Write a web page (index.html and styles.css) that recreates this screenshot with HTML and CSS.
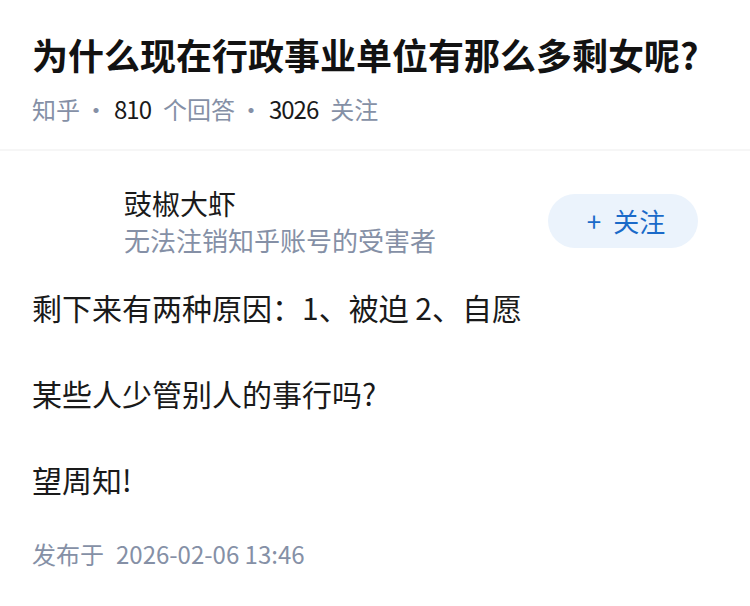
FILE: index.html
```html
<!DOCTYPE html>
<html lang="zh-CN">
<head>
<meta charset="utf-8">
<title>为什么现在行政事业单位有那么多剩女呢?</title>
<link rel="stylesheet" href="styles.css">
</head>
<body>
<div class="page">
  <header class="question">
    <h1 class="title">为什么现在行政事业单位有那么多剩女呢?</h1>
    <div class="meta"><span class="muted">知乎</span><span class="sep">·</span><span class="num">810</span><span class="muted">个回答</span><span class="sep">·</span><span class="num">3026</span><span class="muted">关注</span></div>
  </header>
  <section class="answer">
    <div class="author">
      <div class="avatar"></div>
      <div class="author-info">
        <div class="author-name">豉椒大虾</div>
        <div class="author-bio">无法注销知乎账号的受害者</div>
      </div>
      <button class="follow"><span class="plus">+</span>关注</button>
    </div>
    <div class="content">
      <p>剩下来有两种原因：1、被迫 2、自愿</p>
      <p>某些人少管别人的事行吗?</p>
      <p>望周知!</p>
    </div>
    <div class="time"><span class="time-label">发布于</span>2026-02-06 13:46</div>
  </section>
</div>
</body>
</html>
```
FILE: styles.css
```css
html, body {
  margin: 0;
  padding: 0;
  background: #ffffff;
}
body {
  font-family: "Noto Sans CJK SC", "Noto Sans", sans-serif;
  color: #1a1a1a;
}
.page {
  width: 750px;
}
.question {
  padding: 29px 32px 23px;
  border-bottom: 2px solid #f6f6f6;
}
.title {
  margin: 0;
  font-size: 36px;
  line-height: 50px;
  font-weight: 700;
  color: #121212;
}
.meta {
  margin-top: 13px;
  display: flex;
  align-items: center;
  font-size: 24px;
  line-height: 34px;
}
.muted {
  color: #8590a6;
}
.num {
  color: #1a1a1a;
  margin-right: 12px;
  letter-spacing: -1px;
}
.sep {
  color: #8590a6;
  margin: 0 6px 0 4px;
}
.author {
  margin-top: 30px;
  padding: 0 52px 0 32px;
  display: flex;
  align-items: center;
}
.avatar {
  width: 80px;
  height: 80px;
  flex: none;
  margin-right: 12px;
  background: #ffffff;
}
.author-info {
  flex: 1;
  min-width: 0;
}
.author-name {
  font-size: 28px;
  line-height: 38px;
  color: #1a1a1a;
}
.author-bio {
  font-size: 26px;
  line-height: 36px;
  color: #8590a6;
}
.follow {
  flex: none;
  width: 150px;
  height: 54px;
  border: none;
  border-radius: 27px;
  background: #ebf3fc;
  color: #1a6ac9;
  font-family: inherit;
  font-size: 26px;
  line-height: 54px;
  padding: 0 0 0 6px;
  display: flex;
  align-items: center;
  justify-content: center;
}
.plus {
  margin-right: 12px;
}
.content {
  padding: 0 32px;
  margin-top: 23px;
}
.content p {
  margin: 0 0 40px;
  font-size: 30px;
  line-height: 46px;
  color: #1a1a1a;
}
.content p:last-child {
  margin-bottom: 0;
}
.time {
  margin-top: 35px;
  padding: 0 32px;
  font-size: 24px;
  line-height: 34px;
  color: #8590a6;
}
.time-label {
  margin-right: 12px;
}
```
